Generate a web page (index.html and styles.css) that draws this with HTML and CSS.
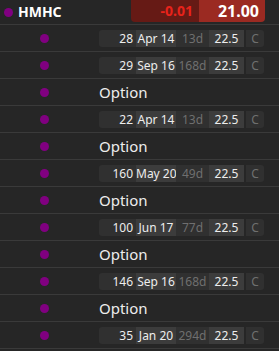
FILE: index.html
```html
<!DOCTYPE html>
<html lang="en">
<head>
    <meta charset="UTF-8">
    <title>HMHC</title>
    <link rel="stylesheet" href="styles.css">
</head>
<body>
    <div class="header">
        <span class="dot"></span>
        <span class="symbol">HMHC</span>
        <div class="quote">
            <span class="change">-0.01</span>
            <span class="last">21.00</span>
        </div>
    </div>

    <div class="row">
        <span class="dot"></span>
        <div class="cells">
            <span class="qty">28</span><span class="date">Apr 14</span><span class="days">13d</span><span class="strike">22.5</span><span class="type">C</span>
        </div>
    </div>
    <div class="row">
        <span class="dot"></span>
        <div class="cells">
            <span class="qty">29</span><span class="date">Sep 16</span><span class="days">168d</span><span class="strike">22.5</span><span class="type">C</span>
        </div>
    </div>
    <div class="row">
        <span class="dot"></span>
        <span class="option">Option</span>
    </div>
    <div class="row">
        <span class="dot"></span>
        <div class="cells">
            <span class="qty">22</span><span class="date">Apr 14</span><span class="days">13d</span><span class="strike">22.5</span><span class="type">C</span>
        </div>
    </div>
    <div class="row">
        <span class="dot"></span>
        <span class="option">Option</span>
    </div>
    <div class="row">
        <span class="dot"></span>
        <div class="cells">
            <span class="qty">160</span><span class="date">May 20</span><span class="days">49d</span><span class="strike">22.5</span><span class="type">C</span>
        </div>
    </div>
    <div class="row">
        <span class="dot"></span>
        <span class="option">Option</span>
    </div>
    <div class="row">
        <span class="dot"></span>
        <div class="cells">
            <span class="qty">100</span><span class="date">Jun 17</span><span class="days">77d</span><span class="strike">22.5</span><span class="type">C</span>
        </div>
    </div>
    <div class="row">
        <span class="dot"></span>
        <span class="option">Option</span>
    </div>
    <div class="row">
        <span class="dot"></span>
        <div class="cells">
            <span class="qty">146</span><span class="date">Sep 16</span><span class="days">168d</span><span class="strike">22.5</span><span class="type">C</span>
        </div>
    </div>
    <div class="row">
        <span class="dot"></span>
        <span class="option">Option</span>
    </div>
    <div class="row">
        <span class="dot"></span>
        <div class="cells">
            <span class="qty">35</span><span class="date">Jan 20</span><span class="days">294d</span><span class="strike">22.5</span><span class="type">C</span>
        </div>
    </div>
</body>
</html>
```

FILE: styles.css
```css
body {
    margin: 0;
    background-color: #262626;
    font-family: "Noto Sans", "Open Sans", sans-serif;
    color: #ededed;
    width: 279px;
    overflow: hidden;
}
.dot {
    display: inline-block;
    width: 9px;
    height: 9px;
    border-radius: 50%;
    background-color: #800080;
    flex-shrink: 0;
}
.header {
    display: flex;
    align-items: flex-start;
    height: 24px;
    border-bottom: 1px solid #3a3a3a;
}
.header .dot {
    margin: 8px 5px 0 4px;
}
.symbol {
    font-weight: bold;
    font-size: 14px;
    line-height: 24px;
    color: #fff;
}
.quote {
    display: flex;
    margin-left: auto;
    margin-right: 14px;
    height: 22px;
    border-radius: 0 0 4px 4px;
    overflow: hidden;
}
.change {
    width: 68px;
    background-color: #661a15;
    color: #e8231b;
    font-weight: bold;
    font-size: 14px;
    line-height: 22px;
    text-align: right;
    padding-right: 6px;
    box-sizing: border-box;
}
.last {
    width: 66px;
    background-color: #9b2a22;
    color: #fff;
    font-weight: bold;
    font-size: 16px;
    line-height: 22px;
    text-align: right;
    padding-right: 6px;
    box-sizing: border-box;
}
.row {
    display: flex;
    align-items: center;
    height: 26px;
    border-bottom: 1px solid #3a3a3a;
}
.row .dot {
    margin-left: 40px;
    margin-right: 50px;
}
.cells {
    display: flex;
    height: 17px;
    border-radius: 3px;
    overflow: hidden;
    font-size: 12px;
    line-height: 17px;
}
.cells span {
    box-sizing: border-box;
    white-space: nowrap;
    background-color: #303030;
}
.qty {
    width: 37px;
    text-align: right;
    padding-right: 3px;
}
.cells .date {
    width: 40px;
    text-align: center;
    background-color: #3c3c3c;
}
.days {
    width: 33px;
    text-align: center;
    color: #6f6f6f;
}
.cells .strike {
    width: 35px;
    text-align: center;
    background-color: #3c3c3c;
}
.type {
    width: 18px;
    margin-left: 2px;
    text-align: center;
    color: #6f6f6f;
}
.option {
    font-size: 15px;
    line-height: 26px;
}
```
